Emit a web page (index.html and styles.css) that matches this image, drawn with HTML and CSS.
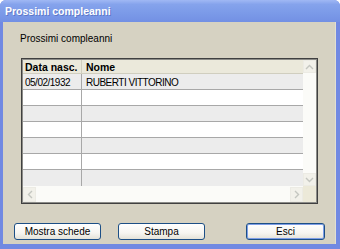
FILE: index.html
```html
<!DOCTYPE html>
<html>
<head>
<meta charset="utf-8">
<link rel="stylesheet" href="styles.css">
</head>
<body>
<div class="window">
  <div class="titlebar">Prossimi compleanni</div>
  <div class="client">
    <div class="label">Prossimi compleanni</div>
    <div class="grid">
      <div class="main">
        <div class="row head">
          <div class="c1">Data nasc.</div>
          <div class="c2">Nome</div>
        </div>
        <div class="row alt">
          <div class="c1 data">05/02/1932</div>
          <div class="c2 data">RUBERTI VITTORINO</div>
        </div>
        <div class="row"><div class="c1"></div><div class="c2"></div></div>
        <div class="row alt"><div class="c1"></div><div class="c2"></div></div>
        <div class="row"><div class="c1"></div><div class="c2"></div></div>
        <div class="row alt"><div class="c1"></div><div class="c2"></div></div>
        <div class="row"><div class="c1"></div><div class="c2"></div></div>
        <div class="row alt last"><div class="c1"></div><div class="c2"></div></div>
      </div>
      <div class="vscroll">
        <div class="sbtn">
          <svg width="9" height="6" viewBox="0 0 9 6"><path d="M1 5 L4.5 1.5 L8 5" fill="none" stroke="#c4c6c0" stroke-width="1.4"/></svg>
        </div>
        <div class="track"></div>
        <div class="sbtn">
          <svg width="9" height="6" viewBox="0 0 9 6"><path d="M1 1 L4.5 4.5 L8 1" fill="none" stroke="#c4c6c0" stroke-width="1.4"/></svg>
        </div>
      </div>
      <div class="hscroll">
        <div class="sbtn">
          <svg width="6" height="9" viewBox="0 0 6 9"><path d="M5 1 L1.5 4.5 L5 8" fill="none" stroke="#c4c6c0" stroke-width="1.4"/></svg>
        </div>
        <div class="track"></div>
        <div class="sbtn">
          <svg width="6" height="9" viewBox="0 0 6 9"><path d="M1 1 L4.5 4.5 L1 8" fill="none" stroke="#c4c6c0" stroke-width="1.4"/></svg>
        </div>
      </div>
      <div class="corner"></div>
    </div>
    <div class="buttons">
      <button class="btn b1">Mostra schede</button>
      <button class="btn b2">Stampa</button>
      <button class="btn b3 default">Esci</button>
    </div>
  </div>
</div>
</body>
</html>
```

FILE: styles.css
```css
* { box-sizing: border-box; }
html, body { margin: 0; padding: 0; }
body {
  width: 340px;
  height: 249px;
  overflow: hidden;
  background: #ffffff;
  font-family: "Liberation Sans", Arial, sans-serif;
  font-size: 10px;
  color: #000;
}
.window {
  width: 340px;
  height: 249px;
  display: flex;
  flex-direction: column;
  background: #7189e2;
  border-radius: 6px 6px 0 0;
  overflow: hidden;
}
.titlebar {
  height: 22px;
  flex: none;
  padding: 5px 0 0 5px;
  color: #fff;
  font-weight: bold;
  font-size: 10.5px;
  text-shadow: 1px 1px 0 rgba(60, 80, 160, 0.45);
  background: linear-gradient(to bottom, #a0b8f4 0%, #85a3ec 20%, #7b9ae8 60%, #7390e4 100%);
}
.client {
  flex: 1;
  margin: 0 4px 5px 3px;
  background: #d6d2c2;
  display: flex;
  flex-direction: column;
  border-right: 1px solid #e2dfd2;
}
.label {
  padding: 11px 0 0 17px;
  height: 36px;
  line-height: 12px;
}
.grid {
  margin-left: 18px;
  width: 297px;
  height: 146px;
  border: 1px solid #404040;
  box-shadow: inset 0 0 0 1px #8c8c88;
  padding: 1px;
  display: grid;
  grid-template-columns: 1fr 13px;
  grid-template-rows: 1fr 16px;
  background: #fff;
}
.main {
  overflow: hidden;
  background: #fff;
}
.row {
  display: flex;
  height: 16px;
  border-bottom: 1px solid #a8a8a8;
  background: #fff;
}
.row.alt { background: #ececec; }
.row.head {
  height: 14px;
  background: #ebe9db;
  border-bottom: 1px solid #d0cebf;
  font-weight: bold;
  font-size: 10.5px;
}
.row.last { border-bottom: none; }
.c1 {
  width: 59px;
  flex: none;
  border-right: 1px solid #a8a8a8;
  padding: 1px 0 0 2px;
  line-height: 13px;
  white-space: nowrap;
}
.head .c1 { border-right: 1px solid #d0cebf; }
.c2 {
  flex: 1;
  padding: 1px 0 0 4px;
  line-height: 13px;
  white-space: nowrap;
}
.data { letter-spacing: -0.5px; padding-top: 2px; }
.vscroll, .hscroll {
  display: flex;
  background: #fbfbf8;
}
.vscroll { flex-direction: column; }
.hscroll { flex-direction: row; }
.track { flex: 1; }
.sbtn {
  width: 13px;
  height: 13px;
  flex: none;
  display: flex;
  align-items: center;
  justify-content: center;
  background: #f2f1ea;
  border: 1px solid #ecebe4;
}
.hscroll .sbtn { height: 15px; margin-top: 1px; }
.corner { background: #ece9d8; }
.buttons {
  display: flex;
  padding: 0 10px 0 11px;
  margin-top: 19px;
}
.btn {
  height: 17px;
  font-family: "Liberation Sans", Arial, sans-serif;
  font-size: 10px;
  color: #000;
  padding: 0;
  border: 1px solid #1c4f86;
  border-radius: 3px;
  background: linear-gradient(to bottom, #ffffff 0%, #f6f5f1 60%, #e4e2d8 100%);
  line-height: 14px;
}
.b1 { width: 87px; }
.b2 { width: 87px; margin-left: 17px; }
.b3 { width: 79px; margin-left: auto; }
.default { box-shadow: inset 0 0 0 1px #7d9de6; }
```
